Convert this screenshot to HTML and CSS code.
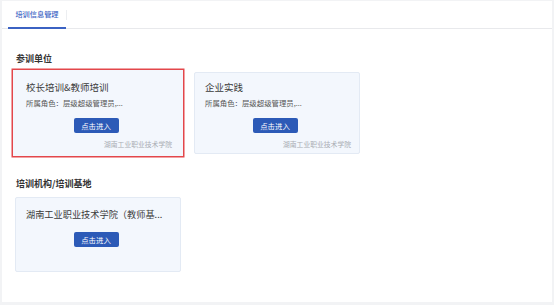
FILE: index.html
```html
<!DOCTYPE html>
<html lang="zh-CN">
  <head>
    <meta charset="UTF-8" />
    <meta name="viewport" content="width=device-width, initial-scale=1.0" />
    <title>培训信息管理</title>
    <link rel="stylesheet" href="styles.css">
  </head>
  <body>
    <div class="panel">
      <div class="tabs">
        <div class="tab active">培训信息管理</div>
        <span class="tab-sep"></span>
      </div>

      <div class="content">
        <h3 class="section-title">参训单位</h3>
        <div class="card-list">
          <div class="card selected">
            <div class="card-title">校长培训&amp;教师培训</div>
            <div class="card-role">所属角色：层级超级管理员,...</div>
            <div class="card-action"><button>点击进入</button></div>
            <div class="card-footer">湖南工业职业技术学院</div>
          </div>
          <div class="card">
            <div class="card-title">企业实践</div>
            <div class="card-role">所属角色：层级超级管理员,...</div>
            <div class="card-action"><button>点击进入</button></div>
            <div class="card-footer">湖南工业职业技术学院</div>
          </div>
        </div>

        <h3 class="section-title second">培训机构/培训基地</h3>
        <div class="card-list">
          <div class="card org">
            <div class="card-title">湖南工业职业技术学院（教师基...</div>
            <div class="card-action"><button>点击进入</button></div>
          </div>
        </div>
      </div>
    </div>
  </body>
</html>
```

FILE: styles.css
```css
* {
  box-sizing: border-box;
}
html,
body {
  height: 100%;
}
body {
  margin: 0;
  padding: 1px 2px 3px 2px;
  background-color: #f2f3f5;
  font-family: "Noto Sans CJK SC", "Noto Sans", sans-serif;
  color: #333;
}
.panel {
  height: 100%;
  background-color: #fff;
}
.tabs {
  display: flex;
  align-items: center;
  height: 28px;
  padding-left: 6px;
  border-bottom: 1px solid #e8e9ec;
}
.tab {
  width: 58px;
  height: 28px;
  line-height: 26px;
  margin-bottom: -1px;
  text-align: center;
  font-size: 7.2px;
  font-weight: 500;
  color: #3b62c3;
}
.tab.active {
  border-bottom: 2px solid #3b62c3;
}
.tab-sep {
  width: 1px;
  height: 10px;
  background-color: #eceef1;
}
.content {
  padding: 0 13px;
}
.section-title {
  margin: 24px 0 7px 1px;
  font-size: 9px;
  line-height: 12px;
  font-weight: 700;
  color: #333;
}
.section-title.second {
  margin-top: 24px;
}
.card-list {
  display: flex;
  gap: 13px;
}
.card {
  width: 166px;
  height: 82px;
  padding: 8px 8px 0 10px;
  background-color: #f3f7fd;
  border: 1px solid #e3eaf4;
  border-radius: 2px;
}
.card.selected {
  border-color: #f3f7fd;
  border-radius: 0;
  box-shadow: 0 0 0 2px #f3f7fd, 0 0 0 3.5px #e3474b;
}
.card-title {
  font-size: 9.5px;
  line-height: 13px;
  color: #3a3a3a;
  white-space: nowrap;
}
.card-role {
  margin-top: 3px;
  font-size: 7.4px;
  line-height: 12px;
  color: #555;
  white-space: nowrap;
}
.card-action {
  display: flex;
  justify-content: center;
  padding-right: 6px;
  margin-top: 9px;
}
button {
  width: 45px;
  height: 15px;
  padding: 0;
  border: none;
  border-radius: 2px;
  background-color: #2c5ab7;
  color: #fff;
  font-family: inherit;
  font-size: 7.4px;
  line-height: 15px;
  cursor: pointer;
}
.card-footer {
  margin-top: 7px;
  text-align: right;
  font-size: 6.8px;
  line-height: 9px;
  color: #a9adb3;
  white-space: nowrap;
}
.card.org {
  height: 75px;
  padding-top: 10px;
}
.card.org .card-title {
  font-size: 9.2px;
}
.card.org .card-action {
  margin-top: 11px;
}
```
